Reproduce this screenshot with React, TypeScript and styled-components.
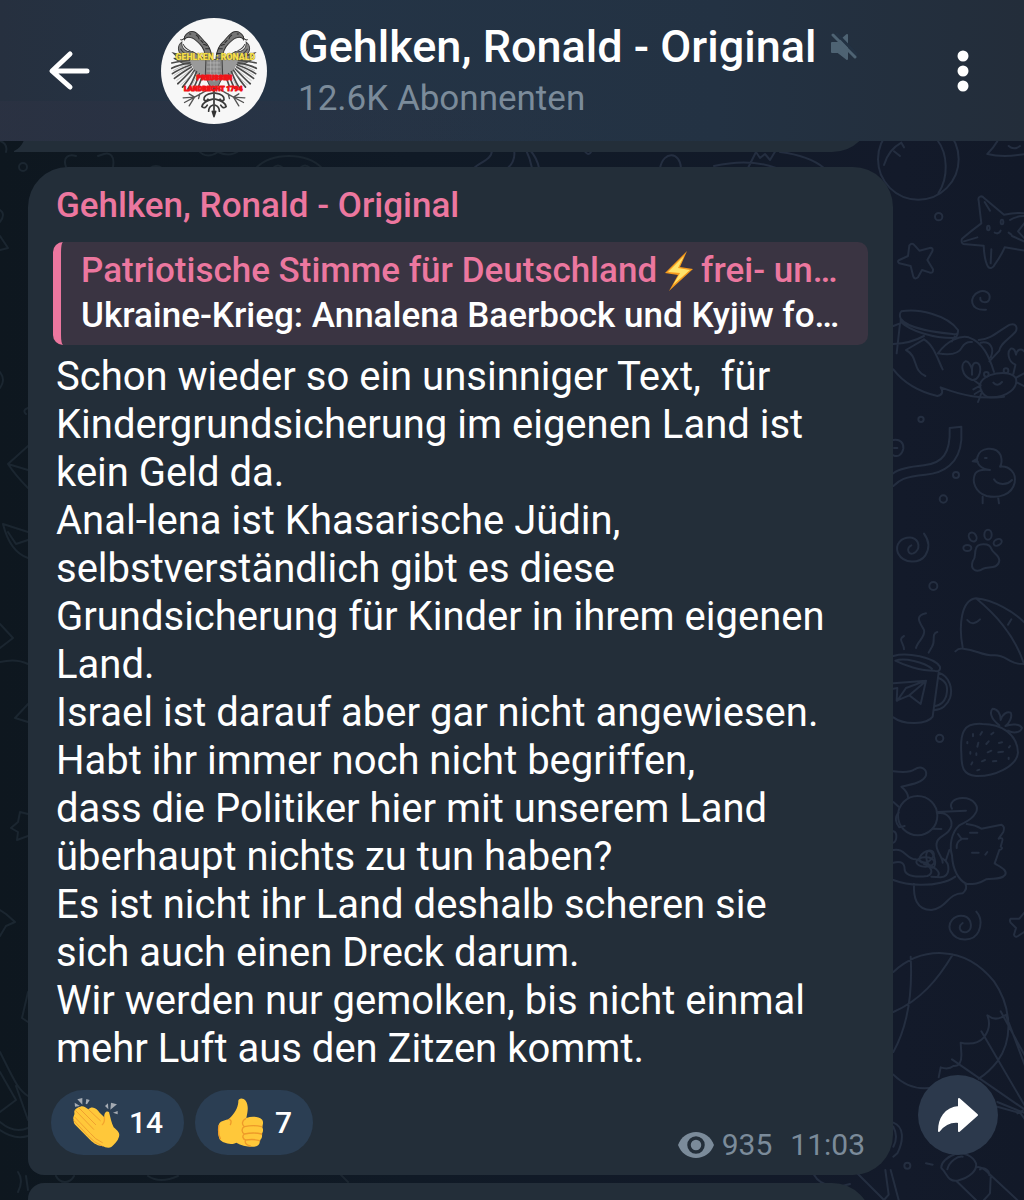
import React from "react";
import styled, { createGlobalStyle } from "styled-components";

const GlobalStyle = createGlobalStyle`
  *, *::before, *::after { box-sizing: border-box; }
  body { margin: 0; background: #121928; }
  button { font: inherit; border: 0; padding: 0; background: none; color: inherit; cursor: pointer; }
  h1, h2, p { margin: 0; font-weight: inherit; }
  svg { display: block; }
`;

const pink = "#ec779f";
const muted = "#7b8b9a";
const bubbleColor = "#232e39";

const Screen = styled.div`
  position: relative;
  display: flex;
  flex-direction: column;
  height: 100vh;
  overflow: hidden;
  font-family: Roboto, "Liberation Sans", sans-serif;
  color: #fff;
  background: linear-gradient(90deg, #0e171f 0%, #101a26 40%, #131a2a 88%, #121928 100%);
`;

const Doodles = styled.svg`
  position: absolute;
  inset: 0;
  width: 100%;
  height: 100%;
  fill: none;
  stroke-linecap: round;
  stroke-linejoin: round;
`;

const Header = styled.header`
  position: relative;
  z-index: 1;
  flex: none;
  display: flex;
  align-items: center;
  height: 141px;
  padding: 0 35px 0 44px;
  background:
    linear-gradient(90deg, rgba(44, 50, 67, 0.7) 0%, rgba(44, 50, 67, 0) 60%) bottom / 100% 40px no-repeat,
    linear-gradient(90deg, #26303f 0%, #243446 25%, #233243 70%, #232d3a 100%);
`;

const IconButton = styled.button`
  display: grid;
  place-items: center;
  width: 52px;
  height: 60px;
`;

const Avatar = styled.div`
  flex: none;
  width: 106px;
  height: 106px;
  margin-left: 65px;
  border-radius: 50%;
  overflow: hidden;
  background: #f7f7f7;
`;

const Channel = styled.div`
  flex: 1;
  min-width: 0;
  margin-left: 31px;
`;

const TitleRow = styled.div`
  display: flex;
  align-items: center;
  gap: 15px;
`;

const Title = styled.h1`
  font-size: 45px;
  line-height: 52px;
  font-weight: 500;
  white-space: nowrap;
`;

const Subscribers = styled.p`
  margin-top: 4px;
  font-size: 35px;
  line-height: 44px;
  color: ${muted};
`;

const Chat = styled.main`
  position: relative;
  flex: 1;
  min-height: 0;
  overflow: hidden;
  padding: 0 26px 0 28px;
`;

const Row = styled.div`
  display: flex;
  align-items: flex-end;
  gap: 25px;
`;

const Bubble = styled.article`
  flex: 1;
  min-width: 0;
  padding: 19px 25px 20px;
  border-radius: 40px 40px 40px 16px;
  background: ${bubbleColor};
`;

const PreviousBubble = styled.div`
  position: relative;
  height: 80px;
  margin: -69px 126px 15px 0;
  border-radius: 0 0 40px 0;
  background: ${bubbleColor};
`;

const Tail = styled.svg`
  position: absolute;
  left: -14px;
  bottom: 0;
`;

const NextBubble = styled.div`
  height: 80px;
  margin: 8px 126px 0 0;
  border-radius: 16px 40px 0 0;
  background: ${bubbleColor};
`;

const Author = styled.h2`
  padding: 0 3px;
  font-size: 35px;
  line-height: 40px;
  font-weight: 500;
  color: ${pink};
`;

const Reply = styled.blockquote`
  margin: 16px 0 8px;
  padding: 6px 12px 7px 20px;
  border-left: 8px solid ${pink};
  border-radius: 10px;
  background: #3a3442;
  font-size: 35px;
  line-height: 45px;
  font-weight: 500;
  white-space: nowrap;
`;

const ReplyTitle = styled.p`
  display: flex;
  align-items: center;
  gap: 1px;
  color: ${pink};
`;

const Message = styled.p`
  padding: 0 3px;
  font-size: 40px;
  line-height: 48px;
  white-space: pre-wrap;
`;

const Footer = styled.footer`
  display: flex;
  align-items: flex-end;
  gap: 11px;
  margin: 17px 0 0 -2px;
`;

const Reaction = styled.button<{ $gap: number }>`
  display: flex;
  align-items: center;
  gap: ${(p) => p.$gap}px;
  height: 65px;
  padding: 0 21px;
  border-radius: 33px;
  background: #2b3e53;
  font-size: 30px;
  line-height: 36px;
  font-weight: 500;
`;

const Meta = styled.div`
  display: flex;
  align-items: center;
  margin: 0 3px -10px auto;
  font-size: 30px;
  line-height: 40px;
  color: ${muted};
`;

const Views = styled.span`
  margin: 0 18px 0 8px;
`;

const ShareButton = styled.button`
  flex: none;
  display: grid;
  place-items: center;
  width: 80px;
  height: 80px;
  margin-bottom: 20px;
  border-radius: 50%;
  background: #2c394c;
`;

const T = 1 / 3;

const Wallpaper = () => (
  <Doodles viewBox="0 0 1024 1200" preserveAspectRatio="xMaxYMin slice" aria-hidden="true">
    <g stroke="#242e40" strokeWidth="6">
      <g transform={`translate(884 140) scale(${T})`}>
        <circle cx="103" cy="58" r="121" />
        <path d="M160 0C192 42 194 112 163 160M0 75C10 40 30 20 52 8M52 8l8 14M30 34l18 14" />
        <path d="M340 4C332 18 320 32 310 42C350 52 390 48 424 42M374 18q16 14 34 0" />
        <circle cx="164" cy="230" r="11" />
        <path d="M284 182C280 168 294 166 300 174L360 224Q400 216 424 220M284 182L292 250Q262 272 234 296C230 308 236 314 246 313L299 317C300 340 304 366 312 380C318 388 328 384 332 374Q352 346 362 322L424 332M302 186l16 26M378 240q16-12 46-12M384 288l40 18M424 246L402 274L424 298M240 304l40-12M322 328l-2 42M374 278l8 6" />
        <ellipse cx="313" cy="264" rx="4" ry="7" /><ellipse cx="354" cy="246" rx="4" ry="7" />
        <path d="M332 278q12 6 18-6" />
        <path d="M76 316Q84 306 92 316L106 332L140 323Q148 324 145 334L130 360L147 388Q148 400 138 398L114 390L102 412Q92 420 88 410L80 378L46 370Q38 364 46 360L72 348Z" />
        <path d="M289 473C286 488 310 492 316 478C322 458 300 448 284 456C254 468 256 514 306 509" />
        <path d="M52 514C100 504 190 524 222 570C224 582 216 584 206 582C160 578 70 566 50 536C46 526 46 520 52 514ZM50 536V545C80 574 150 594 206 594Q222 594 222 572M28 558L48 550L38 640M28 612Q80 610 120 588M120 598C150 616 160 656 176 688M120 598L66 630C104 650 84 690 124 708M28 688C60 730 110 756 160 768C176 766 178 754 170 742C240 768 290 778 360 770M162 640C190 600 230 586 254 592C296 606 316 650 330 696M162 640Q220 650 234 622Q244 604 264 606M204 604l8-14M284 600C320 600 346 570 378 554C396 548 402 564 394 576C370 602 348 612 346 632L316 664M290 608C320 602 332 626 320 652" />
        <path d="M264 720C230 706 230 670 244 664C254 662 262 680 264 688C264 664 284 662 288 680C292 702 280 722 264 720ZM264 686v18M394 674C370 664 370 634 380 626C390 622 394 634 396 644C398 628 412 624 420 634M272 722l18 14M394 676l-6 26M288 736C290 700 380 684 396 716C402 744 370 772 320 772C300 772 288 752 288 736ZM268 748l18-10M272 762l20-12M282 786l10-26M398 712l22-12M400 728l20 10M328 728q12 14 26-2" />
        <circle cx="307" cy="703" r="7" /><circle cx="366" cy="692" r="7" /><circle cx="111" cy="838" r="8" />
      </g>
      <g transform={`translate(884 420) scale(${T})`}>
        <path d="M28 60C48 56 60 70 58 86C54 106 40 112 28 106M30 84h10M197 24L232 20V60C226 130 180 160 124 164C60 170 46 180 28 198M197 24C200 100 176 130 120 136C60 142 40 150 28 160" />
        <circle cx="216" cy="165" r="9" /><circle cx="178" cy="237" r="11" /><circle cx="148" cy="498" r="12" /><circle cx="167" cy="955" r="11" />
        <path d="M318 150C290 148 276 130 280 112C286 82 336 76 350 106C354 120 352 134 348 140C376 136 398 160 392 188C384 224 344 236 308 228C274 218 262 184 274 160C282 150 302 148 318 150M280 116L266 124L282 126M303 114h5M330 178C340 196 370 196 384 180M296 230v20M342 230l3 20" />
        <path d="M82 376C66 384 72 406 88 400C110 390 108 360 84 353C50 350 32 374 42 400C60 434 108 430 124 406C138 384 134 360 120 341" />
        <ellipse cx="266" cy="351" rx="11" ry="14" transform="rotate(-30 266 351)" /><ellipse cx="312" cy="344" rx="11" ry="15" /><ellipse cx="341" cy="367" rx="13" ry="9" transform="rotate(-30 341 367)" /><ellipse cx="250" cy="384" rx="12" ry="9" />
        <path d="M276 386C278 370 316 366 322 386C326 400 346 404 346 422C342 450 310 438 298 446C276 460 258 448 266 424C278 408 270 400 276 386Z" />
        <path d="M236 682C224 620 230 540 276 535C330 540 390 576 424 610M276 535C330 580 390 640 420 732M214 694Q224 684 238 686C280 690 290 706 330 706C370 704 370 734 424 732M250 600Q266 620 288 598M382 598l-10 16" />
        <path d="M60 648C40 658 60 670 60 688M126 580C88 588 110 610 120 630C126 650 100 664 96 684M160 636C140 642 156 664 144 680Q138 690 134 698" />
        <path d="M28 708C70 696 150 712 168 740C170 754 160 756 150 752C110 752 60 736 34 722C60 712 120 726 144 746M164 758L146 890C130 914 60 916 28 892M164 758C200 770 206 810 198 834C190 856 172 870 152 870M164 774C188 784 194 800 186 830C180 846 170 856 154 858M28 790L126 782L110 852L76 826L38 842L40 804L28 806M40 842L66 804L126 782M76 826L120 788" />
        <path d="M346 916C320 896 316 876 326 866C340 866 350 880 350 900C356 880 370 874 380 878C386 890 376 910 364 918C384 910 408 912 414 924C408 940 386 940 372 932" />
      </g>
      <g transform={`translate(884 700) scale(${T})`}>
        <path d="M240 92C250 74 270 70 296 72C350 72 400 100 402 158C398 200 330 230 276 228C236 224 232 200 232 160C230 130 232 106 240 92Z" />
        <path d="M267 102v7M294 96l-5 8M328 98l-6 5M250 126v4M283 128l-3 12M314 124l-7 8M354 127l-9 2M259 156v5M277 160v5M322 152l-11 5M357 155l-14 2M378 138l-3 4M265 187l-3 6M303 180l-9 4M337 183l-10 1M374 173v4M286 209l-6 2" />
        <circle cx="101" cy="347" r="59" />
        <path d="M28 214C60 218 80 218 92 208C110 196 130 206 126 226C118 246 90 252 52 260Q72 276 72 292M28 306L44 320M44 338C30 352 36 370 46 382L62 378M28 394C42 398 38 424 28 428M158 336L246 332M160 340C190 334 206 360 202 378C194 410 160 404 158 430C152 450 176 470 176 488M146 386L172 387M204 326C194 310 210 294 236 294C270 294 288 322 274 340C264 360 240 368 226 376C200 400 196 440 204 466C206 510 224 540 248 552" />
        <path d="M248 372C266 374 276 376 292 386L352 374Q364 380 358 396L344 416Q360 410 354 426L350 440Q360 446 346 450L332 490C350 502 370 510 364 524C352 540 330 534 306 538C284 552 270 552 248 552M28 450C60 442 70 480 96 478C130 490 176 510 162 528M28 488C56 482 62 492 62 510C66 530 100 532 130 528C150 520 144 500 120 492M28 540C80 560 140 556 170 548Q194 544 214 530M176 476C200 490 200 530 170 532L142 530M90 552C88 590 96 630 142 630C190 624 190 580 236 580Q252 566 244 552M196 450L186 480M222 402l10 14h18M232 418q-16 8-14 26M258 398h22M264 458h20M304 464l6-8" />
        <ellipse cx="128" cy="470" rx="24" ry="15" transform="rotate(-35 128 470)" /><ellipse cx="124" cy="486" rx="27" ry="14" /><ellipse cx="140" cy="478" rx="12" ry="26" transform="rotate(-15 140 478)" />
        <path d="M236 669C220 680 228 700 248 696C266 690 266 656 240 648C210 642 188 670 200 694C220 730 270 724 284 694C294 670 290 650 277 635M424 634L406 656L380 656Q374 664 384 672L396 684L390 704Q392 714 402 708L424 694" />
      </g>
      <g transform={`translate(884 940) scale(${T})`}>
        <path d="M28 96C110 20 240 12 330 124C376 190 394 290 340 364C320 390 300 406 284 416M80 50C86 160 70 260 28 336M206 44C160 120 110 180 28 216M28 404C60 436 100 452 150 442M164 412L170 382Q194 390 208 378Q234 380 232 340L230 308Q276 318 300 292Q324 260 310 226Q330 242 352 232L370 222M204 358L424 510M292 274L424 500M350 214L424 350M366 226L424 380M340 486L424 520M340 500L410 520L424 540M400 520l16-8" />
        <path d="M28 548C60 560 60 600 40 640L28 650M28 560Q44 590 28 620M4 690L14 764L0 780M20 690L44 780M126 670l20 4" />
        <circle cx="70" cy="677" r="9" />
        <path d="M172 684C170 668 190 650 214 642C240 634 268 650 276 670C280 690 260 712 220 722C190 726 190 700 172 684ZM190 688C196 664 220 648 236 650M276 682Q290 676 312 698L400 780M218 724L276 780M288 688C300 680 316 690 316 706M320 712L318 760L300 780" />
      </g>
      <path strokeWidth="2" d="M474 168C480 162 492 160 492 150M508 168Q516 160 514 150M532 168Q530 158 526 150M539 168Q537 158 530 150M584 150q5 8 8 0M660 168C664 150 680 152 681 168M714 166C740 160 760 162 776 168M748 168L756 152L760 158L765 154L770 160L776 150M780 152C796 154 812 158 824 168" />
      <path strokeWidth="2" d="M812 1170C816 1184 832 1190 850 1184M856 1172L884 1200" />
    </g>
    <g stroke="#1b2630" strokeWidth="2">
      <circle cx="23" cy="167" r="4" />
      <path d="M66 167C62 156 70 154 76 156M113 167C115 156 110 152 104 154L98 156M198 150Q206 160 218 152Q230 158 240 150M150 168Q156 164 162 168M256 168C272 152 306 152 322 168M273 168q5-5 10 0M300 168q5-5 10 0" />
      <path d="M0 141Q8 144 6 152M0 210Q6 214 0 222M0 236L8 248L0 250M0 372Q6 380 0 388M28 408Q22 410 26 414M28 446L8 464Q16 476 28 488M8 464L28 470M3 524L28 532M3 524Q10 552 28 558M8 532l8 12 12-4M0 624L13 638L0 648M0 662Q16 658 28 664M28 704L15 718L28 722M28 814L20 812L18 822L11 828L18 832L17 840L28 836M0 910L6 914L15 922L6 926L0 936M28 992L22 1018L28 1022M0 1052C14 1080 18 1090 28 1096M0 1072L16 1100L0 1112M0 1122Q14 1134 28 1128M16 1086L28 1120M0 1130Q14 1140 28 1136M18 1172Q24 1180 18 1192M26 1176L28 1190M56 1176C60 1184 70 1184 74 1176M148 1176Q160 1184 178 1176M340 1174l8 8" />
    </g>
  </Doodles>
);

const EagleHalf = () => (
  <g>
    <path d="M104 82C110 72 120 64 132 67C146 72 152 84 162 94C174 104 184 118 186 146L168 150C166 128 160 114 150 104C142 96 134 86 122 84C114 82 108 84 104 90Z" fill="#777" stroke="#333" strokeWidth="3" />
    <path d="M118 74h6M138 76q8 4 10 14M152 92l8 8M160 104l12 4M166 118h14M168 132h16M104 86q-8 8-12 4" fill="none" stroke="#2b2b2b" strokeWidth="3" />
    <path d="M128 126C108 130 94 116 96 98C82 108 82 130 100 138L70 130L88 148L72 146L100 162L150 168L168 150Z" fill="#858585" stroke="#444" strokeWidth="3" />
    <path d="M100 104q6 14 22 20M92 118q8 14 26 20M86 136q20 6 38 8M104 148q20 4 40 2" stroke="#3a3a3a" strokeWidth="3" fill="none" />
    <path d="M120 150L168 150L168 196L150 206Q130 186 120 150Z" fill="#9a9a9a" />
    <g fill="none" stroke="#4a4a4a" strokeWidth="5" strokeLinecap="round">
      <path d="M118 152Q86 156 66 160M120 160Q86 166 66 176M122 166Q88 178 68 192M124 172Q92 192 74 206M128 178Q100 208 84 222M134 182Q112 216 98 232M140 186Q126 222 114 238M148 192Q138 224 130 236M158 198Q150 218 146 230" />
    </g>
    <g fill="none" stroke="#aaa" strokeWidth="2">
      <path d="M120 164Q88 171 70 183M122 170Q90 184 72 198M128 176Q98 200 80 213M136 184Q112 210 92 226M146 190Q130 220 122 234" />
    </g>
    <path d="M176 238Q156 250 134 262M134 262L100 264M134 262L104 278M134 262L118 288M134 262l-16-10M150 252l-4 14" fill="none" stroke="#555" strokeWidth="4" strokeLinecap="round" />
    <path d="M188 250Q160 254 162 270Q170 276 174 268M188 268Q160 274 156 290Q166 298 172 286M188 286Q176 290 176 304" fill="none" stroke="#3a3a3a" strokeWidth="5" strokeLinecap="round" />
  </g>
);

const AvatarArt = () => (
  <svg width="106" height="106" viewBox="34 26 316 316" role="img" aria-label="Gehlken, Ronald">
    <EagleHalf />
    <g transform="translate(384 0) scale(-1 1)"><EagleHalf /></g>
    <path d="M168 144Q192 156 216 144L218 200Q208 226 192 246Q176 226 166 200Z" fill="#888" stroke="#444" strokeWidth="3" />
    <path d="M172 160h38M170 172h42M170 184h42M172 196h38M176 208h30M182 150v56M192 150v66M201 150v56" stroke="#bbb" strokeWidth="2" />
    <path d="M192 236V320M192 320l-5-16M192 320l5-16" stroke="#333" strokeWidth="5" fill="none" strokeLinecap="round" />
    <g fontFamily="Roboto, sans-serif" fontWeight="900" textAnchor="middle" paintOrder="stroke" strokeLinejoin="round">
      <text x="196" y="150" fontSize="26" fill="#f7e04a" stroke="#8d7c2c" strokeWidth="2">GEHLKEN : RONALD</text>
      <text x="193" y="210" fontSize="21" fill="#ef1418" stroke="#ef1418" strokeWidth="3">PREUSSEN</text>
      <text x="190" y="244" fontSize="21" fill="#ef1418" stroke="#ef1418" strokeWidth="3">LANDRECHT 1794</text>
    </g>
  </svg>
);

const Clap = () => (
  <svg width="50" height="54" viewBox="125 78 150 162" aria-hidden="true">
    <g fill="#a5abb3">
      <path d="M141 88L156 84L156 104ZM168 87L178 90L170 103L166 101ZM133 98L149 108L134 110ZM224 108L233 100L234 118ZM242 98L260 103L240 119ZM248 128L262 123V133Z" />
    </g>
    <path d="M130 150C126 140 134 136 132 128C130 118 142 112 150 110C158 106 166 112 174 118C186 106 200 116 208 128L222 142C220 130 228 120 236 126C240 142 244 160 250 172C262 182 270 190 266 200C262 214 252 222 244 230C236 236 224 232 216 228C196 226 186 216 176 206L136 166C130 160 130 156 130 150Z" fill="#ffc83a" />
    <path d="M134 142L180 190Q194 208 216 218M136 122L190 178M146 114L196 164M174 118L210 152M131 152L172 196Q190 218 216 228" fill="none" stroke="#f0a030" strokeWidth="3" strokeLinecap="round" />
    <path d="M222 142Q224 156 216 164" fill="none" stroke="#f4a52e" strokeWidth="4" strokeLinecap="round" />
  </svg>
);

const ThumbsUp = () => (
  <svg width="50" height="54" viewBox="557 78 150 162" aria-hidden="true">
    <path d="M624 96C622 84 638 82 646 92C656 108 652 124 648 144C664 138 686 140 694 148C702 156 696 166 696 172C700 180 698 188 694 192C698 202 692 208 688 212C690 224 680 230 666 230C646 230 632 226 618 218C604 226 576 220 568 208C562 194 562 176 566 162C572 150 586 152 596 146C612 132 622 116 624 96Z" fill="#ffc83a" />
    <path d="M596 148Q606 150 600 164M566 166Q562 190 570 206M646 146C634 152 634 164 642 170C632 176 634 188 642 192C634 198 638 208 646 210C642 218 648 226 660 228M642 170Q670 164 694 170M642 192Q670 186 694 192M646 210Q670 206 688 212" fill="none" stroke="#ee9a2a" strokeWidth="4" strokeLinecap="round" />
  </svg>
);

const Bolt = () => (
  <svg width="42" height="42" viewBox="0 0 42 42" role="img" aria-label="⚡">
    <path d="M29 1L7 23L20 25L11 41L35 19L22 17Z" fill="#f59a1c" />
    <path d="M26 6L10 22L22 23L15 35L32 20L20 18Z" fill="#ffe36a" />
  </svg>
);

export default function App() {
  return (
    <>
      <GlobalStyle />
      <Screen>
        <Wallpaper />
        <Header>
          <IconButton aria-label="Zurück">
            <svg width="44" height="44" viewBox="0 0 44 44" fill="none" stroke="#fff" strokeWidth="5" strokeLinecap="round" strokeLinejoin="round">
              <path d="M39 22H5M22 5L4 22L22 38" />
            </svg>
          </IconButton>
          <Avatar><AvatarArt /></Avatar>
          <Channel>
            <TitleRow>
              <Title>Gehlken, Ronald - Original</Title>
              <svg width="26" height="28" viewBox="0 0 26 28" aria-label="Stumm" role="img">
                <path d="M1 10H7L16 2V26L7 19H1Z" fill="#4e6373" stroke="#4e6373" strokeWidth="2" strokeLinejoin="round" />
                <path d="M5 0L27 23" stroke="#233243" strokeWidth="3" />
                <path d="M2 2L24 24" stroke="#4e6373" strokeWidth="3" strokeLinecap="round" />
              </svg>
            </TitleRow>
            <Subscribers>12.6K Abonnenten</Subscribers>
          </Channel>
          <IconButton aria-label="Menü">
            <svg width="12" height="42" viewBox="0 0 12 42" fill="#fff">
              <circle cx="6" cy="6" r="5.5" /><circle cx="6" cy="21" r="5.5" /><circle cx="6" cy="36" r="5.5" />
            </svg>
          </IconButton>
        </Header>

        <Chat>
          <PreviousBubble>
            <Tail width="14" height="12" viewBox="0 0 14 12" aria-hidden="true">
              <path d="M10 0Q7 8 0 11V12H14V0Z" fill={bubbleColor} />
            </Tail>
          </PreviousBubble>
          <Row>
            <Bubble>
              <Author>Gehlken, Ronald - Original</Author>
              <Reply>
                <ReplyTitle>
                  <span>Patriotische Stimme für Deutschland</span>
                  <Bolt />
                  <span>frei- un…</span>
                </ReplyTitle>
                <p>Ukraine-Krieg: Annalena Baerbock und Kyjiw fo…</p>
              </Reply>
              <Message>{`Schon wieder so ein unsinniger Text,  für
Kindergrundsicherung im eigenen Land ist
kein Geld da.
Anal-lena ist Khasarische Jüdin,
selbstverständlich gibt es diese
Grundsicherung für Kinder in ihrem eigenen
Land.
Israel ist darauf aber gar nicht angewiesen.
Habt ihr immer noch nicht begriffen,
dass die Politiker hier mit unserem Land
überhaupt nichts zu tun haben?
Es ist nicht ihr Land deshalb scheren sie
sich auch einen Dreck darum.
Wir werden nur gemolken, bis nicht einmal
mehr Luft aus den Zitzen kommt.`}</Message>
              <Footer>
                <Reaction $gap={7}><Clap />14</Reaction>
                <Reaction $gap={9}><ThumbsUp />7</Reaction>
                <Meta>
                  <svg width="36" height="26" viewBox="0 0 36 26" aria-label="Aufrufe" role="img">
                    <path d="M18 0C10 0 3 5 0 13C3 21 10 26 18 26C26 26 33 21 36 13C33 5 26 0 18 0Z" fill={muted} />
                    <circle cx="18" cy="13" r="7" fill={muted} stroke={bubbleColor} strokeWidth="3.5" />
                  </svg>
                  <Views>935</Views>
                  <time>11:03</time>
                </Meta>
              </Footer>
            </Bubble>
            <ShareButton aria-label="Weiterleiten">
              <svg width="42" height="36" viewBox="0 0 42 36" fill="#fff" stroke="#fff" strokeWidth="2" strokeLinejoin="round">
                <path d="M22 2L40 18L22 34V25C14 24 8 26 2 34C2 22 8 11 22 10Z" />
              </svg>
            </ShareButton>
          </Row>
          <NextBubble />
        </Chat>
      </Screen>
    </>
  );
}
